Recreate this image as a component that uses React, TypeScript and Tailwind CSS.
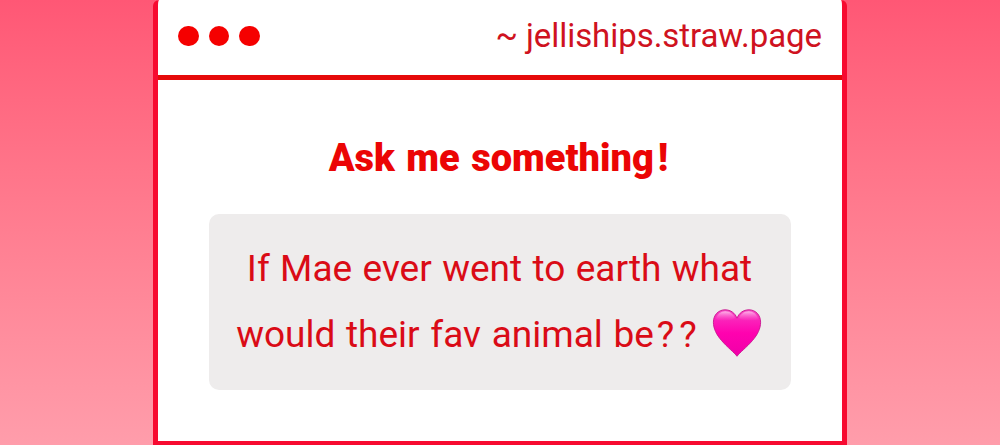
function HeartIcon() {
  return (
    <svg viewBox="0 0 50 50" className="mb-[4px] h-[50px] w-[50px] shrink-0" aria-label="pink heart">
      <defs>
        <linearGradient id="heart-fill" x1="0" y1="0" x2="0" y2="1">
          <stop offset="0" stopColor="#f44fc4" />
          <stop offset="0.25" stopColor="#fb1fb9" />
          <stop offset="0.5" stopColor="#ff02af" />
          <stop offset="1" stopColor="#f000a8" />
        </linearGradient>
        <linearGradient id="heart-shine" x1="0" y1="0" x2="0" y2="1">
          <stop offset="0" stopColor="#ffd0f2" stopOpacity="0.8" />
          <stop offset="1" stopColor="#ff5fd0" stopOpacity="0" />
        </linearGradient>
      </defs>
      <path
        d="M25 48.3C22.4 44.6 15.5 39.5 9.5 32.5C4.5 26.7 1.4 20.6 1.4 14.2C1.4 7 6.4 1.8 13 1.8C18.7 1.8 23 5 25 10.2C27 5 31.3 1.8 37 1.8C43.6 1.8 48.6 7 48.6 14.2C48.6 20.6 45.5 26.7 40.5 32.5C34.5 39.5 27.6 44.6 25 48.3Z"
        fill="url(#heart-fill)"
        stroke="#c9148f"
        strokeWidth="0.9"
      />
      <path d="M4 11C5 6 9 3.2 13.2 3.2C18 3.2 21.5 6 23 10C19 13 8 14 4 11Z" fill="url(#heart-shine)" />
      <path d="M46 11C45 6 41 3.2 36.8 3.2C32 3.2 28.5 6 27 10C31 13 42 14 46 11Z" fill="url(#heart-shine)" />
    </svg>
  );
}

function TitleBar() {
  return (
    <header className="flex h-[80px] items-center justify-between border-b-[5px] border-[#e60a0a] px-[20px]">
      <div className="flex gap-[10px] pb-[3px]">
        <span className="size-[20.5px] rounded-full bg-[#f50000]" />
        <span className="size-[20.5px] rounded-full bg-[#f50000]" />
        <span className="size-[20.5px] rounded-full bg-[#f50000]" />
      </div>
      <p className="pb-[3px] text-[33px] leading-[40px] tracking-[-0.06px] whitespace-nowrap text-[#cf1220]">~ jelliships.straw.page</p>
    </header>
  );
}

export default function App() {
  return (
    <main className="flex h-[445px] w-full justify-center overflow-hidden bg-linear-to-b from-[#ff5775] to-[#ff9dab] font-[Roboto,sans-serif]">
      <section className="flex h-[446px] w-[694px] flex-col rounded-t-[6px] border-x-[5px] border-b-[5px] border-[#f70a30] bg-white">
        <TitleBar />
        <h1 className="mt-[54px] pr-[3px] text-center text-[38px] leading-[48px] font-black text-[#eb0505] [word-spacing:2px]">
          Ask me something<span className="ml-[4px]">!</span>
        </h1>
        <div className="mx-auto mt-[32px] flex h-[176px] w-[582px] flex-col justify-center rounded-[10px] bg-[#eeecec] text-[37px] leading-[66px] whitespace-nowrap text-[#da0b16] [word-spacing:1.2px]">
          <p className="pr-px text-center">If Mae ever went to earth what</p>
          <p className="flex items-center justify-center gap-[10px] pr-[2px]">
            <span className="[word-spacing:1.5px]">
              would their fav animal be<span className="ml-[3px] tracking-[5px]">??</span>
            </span>
            <HeartIcon />
          </p>
        </div>
      </section>
    </main>
  );
}
